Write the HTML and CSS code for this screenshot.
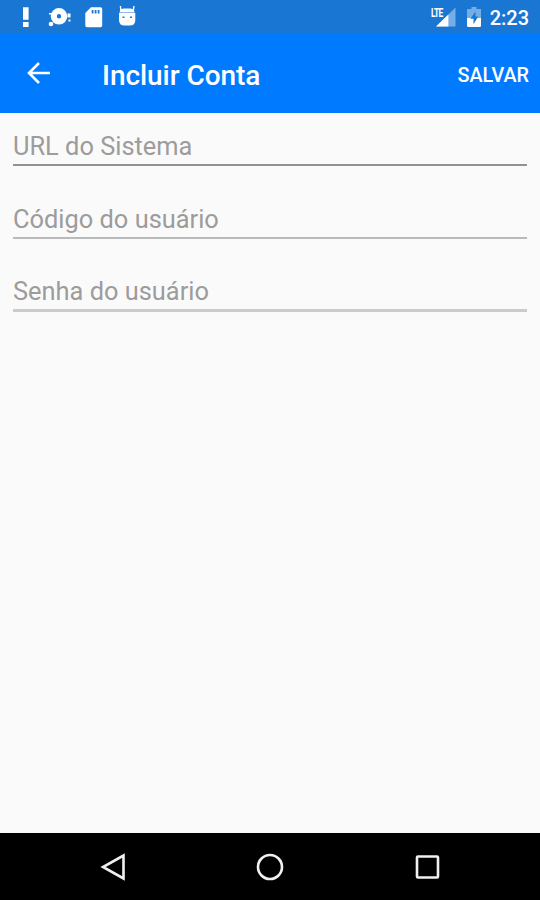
FILE: index.html
```
<!DOCTYPE html>
<html lang="pt-BR">

<head>
    <meta charset="utf-8">
    <meta name="viewport" content="width=device-width, initial-scale=1.0">
    <title>Incluir Conta</title>
    <link rel="stylesheet" href="styles.css">
</head>

<body>
    <div class="status-bar">
        <svg class="status-icons" width="150" height="34" viewBox="0 0 150 34" fill="#fff">
            <path d="M23 7.300h5.600v12.400H23zM23 22h5.600v5H23z" />
            <path fill-rule="evenodd" d="M59 8a8.300 8.300 0 1 1 0 16.600A8.300 8.300 0 0 1 59 8zm0 6.100a2.200 2.200 0 1 0 0 4.400 2.200 2.200 0 0 0 0-4.400z" />
            <circle cx="51" cy="24" r="2.300" />
            <path d="M49 13h3v1.500h-3zM67.500 13.500h3v4h-3zM68.500 19.500h2v2h-2z" />
            <path fill-rule="evenodd" d="M91 7.300h9.500q1.700 0 1.700 1.700v16.500q0 1.700-1.700 1.700H87q-1.700 0-1.700-1.700V13zm.700 2.700v3.500h1.800V10zm3 0v3.500h1.800V10zm3 0v3.500h1.800V10z" />
            <path fill-rule="evenodd" d="M119 13h16.300v7q0 5.500-5.500 5.500h-5.300q-5.500 0-5.500-5.500zm3.500 3.500v1.500h2v-1.500zm7.500 0v1.500h2v-1.500z" />
            <path d="M119.500 12.600q.5-3.600 4-4.100h7.200q3.500 .5 4 4.100z" />
            <path d="M121 11l-.6-5M133.300 11l.6-5" stroke="#fff" stroke-width="1.400" />
        </svg>
        <div class="status-right">
            <div class="signal">
                <span class="lte">LTE</span>
                <svg width="20" height="20" viewBox="0 0 21 20">
                    <path d="M20.500 0v20H0z" fill="#75ade5" />
                    <path d="M13 7.300V20H0z" fill="#fff" />
                </svg>
            </div>
            <svg class="battery" width="14" height="20" viewBox="0 0 14 20">
                <path d="M4.500 0h5v2H14v9H0V2h4.500z" fill="#75ade5" />
                <path d="M0 11h14v7.500q0 1.500-1.500 1.500h-11Q0 20 0 18.500z" fill="#fff" />
                <path d="M8.500 4.500l-5 7.200h3v5.500l4.700-7.700H8.500z" fill="#1976d2" />
            </svg>
            <span class="clock">2:23</span>
        </div>
    </div>

    <header class="app-bar">
        <svg class="back" width="24" height="24" viewBox="0 0 24 24" fill="none" stroke="#fff" stroke-width="2.600">
            <path d="M24 12H3M13 2L3 12l10 10" />
        </svg>
        <h1>Incluir Conta</h1>
        <button class="save">SALVAR</button>
    </header>

    <main class="form">
        <input class="url" type="text" placeholder="URL do Sistema">
        <input class="codigo" type="text" placeholder="Código do usuário">
        <input class="senha" type="password" placeholder="Senha do usuário">
    </main>

    <nav class="nav-bar">
        <svg width="28" height="28" viewBox="0 0 28 28">
            <path d="M24.500 2.500v23L4 14z" />
        </svg>
        <svg width="28" height="28" viewBox="0 0 28 28">
            <circle cx="14" cy="14" r="12" />
        </svg>
        <svg width="28" height="28" viewBox="0 0 28 28">
            <rect x="4" y="3.500" width="21" height="21" rx="1" />
        </svg>
    </nav>
</body>

</html>
```

FILE: styles.css
```
:root {
    --status-color: #1976d2;
    --primary-color: #007aff;
    --background: #fafafa;
}

* {
    box-sizing: border-box;
}

body {
    font-family: Roboto, sans-serif;
    margin: 0;
    height: 900px;
    display: flex;
    flex-direction: column;
    background: var(--background);
    overflow: hidden;
}

.status-bar {
    height: 34px;
    display: flex;
    justify-content: space-between;
    background: var(--status-color);
    color: white;
}

.status-right {
    display: flex;
    align-items: center;
    padding-right: 11px;
}

.signal {
    position: relative;
    width: 26px;
    height: 20px;
    display: flex;
    justify-content: flex-end;
}

.lte {
    position: absolute;
    left: 1px;
    top: -1px;
    font-size: 13px;
    font-weight: bold;
    line-height: 13px;
    letter-spacing: -1px;
    transform: scaleX(0.65);
    transform-origin: left;
}

.battery {
    margin: 0 9px 0 11px;
}

.clock {
    font-size: 20px;
    font-weight: 500;
    line-height: 34px;
    padding-top: 2px;
}

.app-bar {
    height: 79px;
    display: flex;
    align-items: center;
    padding: 0 11px 1px 26px;
    background: var(--primary-color);
    color: white;
}

.app-bar h1 {
    flex: 1;
    margin: 4px 0 0 52px;
    font-size: 28px;
    font-weight: 500;
    letter-spacing: -0.05px;
}

.save {
    padding: 4px 0 0;
    border: none;
    background: none;
    color: white;
    font-family: inherit;
    font-size: 19.8px;
    font-weight: 500;
}

.form {
    flex: 1;
    padding: 13px 13px 0;
}

input {
    display: block;
    width: 100%;
    height: 40px;
    margin-bottom: 33px;
    padding: 1px 0 0;
    border: none;
    border-bottom: 2px solid #bababa;
    border-radius: 0;
    background: none;
    font-family: inherit;
    font-size: 25.4px;
    outline: none;
}

input::placeholder {
    color: #9c9c9c;
    opacity: 1;
}

.url {
    border-bottom-color: #929292;
}

.senha {
    border-bottom: 3px solid #cbcbcb;
}

.nav-bar {
    height: 67px;
    display: flex;
    justify-content: space-between;
    align-items: center;
    padding: 0 99px;
    background: black;
}

.nav-bar svg {
    fill: none;
    stroke: #f0f0f0;
    stroke-width: 2.6;
}
```
